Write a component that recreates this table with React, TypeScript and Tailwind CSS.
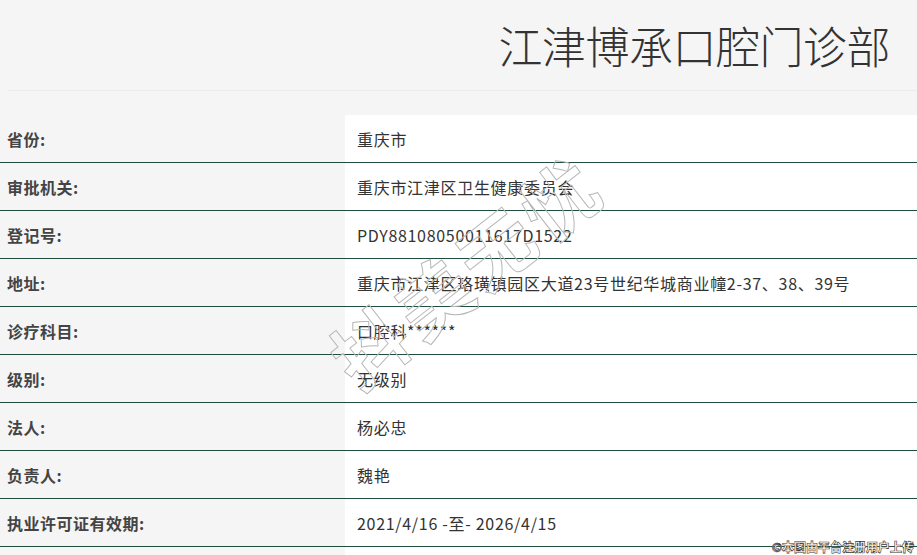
import React from 'react';

const rows = [
  { label: '省份:', value: '重庆市' },
  { label: '审批机关:', value: '重庆市江津区卫生健康委员会' },
  { label: '登记号:', value: 'PDY88108050011617D1522' },
  { label: '地址:', value: '重庆市江津区珞璜镇园区大道23号世纪华城商业幢2-37、38、39号' },
  { label: '诊疗科目:', value: '口腔科******' },
  { label: '级别:', value: '无级别' },
  { label: '法人:', value: '杨必忠' },
  { label: '负责人:', value: '魏艳' },
  { label: '执业许可证有效期:', value: '2021/4/16 -至- 2026/4/15' },
  { label: '', value: '' },
];

export default function App() {
  return (
    <div
      className="relative h-[555px] w-[917px] overflow-hidden bg-[#f5f5f5]"
      style={{ fontFamily: '"Noto Sans CJK SC", "Noto Sans", sans-serif' }}
    >
      {/* 标题 */}
      <div className="flex h-[90px] items-center justify-end pr-[27px]">
        <h1 className="text-[44px] font-light leading-none tracking-[-0.5px] text-[#333]">江津博承口腔门诊部</h1>
      </div>
      <div className="ml-[8px] h-px bg-[#ebebeb]" />

      {/* 信息表 */}
      <div className="mt-[24px]">
        {rows.map((r, i) => (
          <div key={i} className="box-border flex h-12 border-b border-[#1f4d3e]">
            <div className="flex w-[345px] items-center pl-[7px] text-[16px] font-bold tracking-[0.5px] text-[#444]">{r.label}</div>
            <div className="flex flex-1 items-center bg-white pl-[12px] text-[16px] tracking-[0.7px] text-[#333]">{r.value}</div>
          </div>
        ))}
      </div>

      {/* 水印 */}
      <div
        className="pointer-events-none absolute left-[305px] top-[232px] origin-center -rotate-[38deg] whitespace-nowrap text-[74px] font-bold leading-none tracking-[6px] text-transparent"
        style={{ WebkitTextStroke: '1px #b8b8b8' }}
      >
        抖美无忧
      </div>
      <div
        className="pointer-events-none absolute bottom-[2px] right-[3px] text-[12px] font-black leading-none text-white"
        style={{ WebkitTextStroke: '0.6px #333' }}
      >
        ©本图由平台注册用户上传
      </div>
    </div>
  );
}
